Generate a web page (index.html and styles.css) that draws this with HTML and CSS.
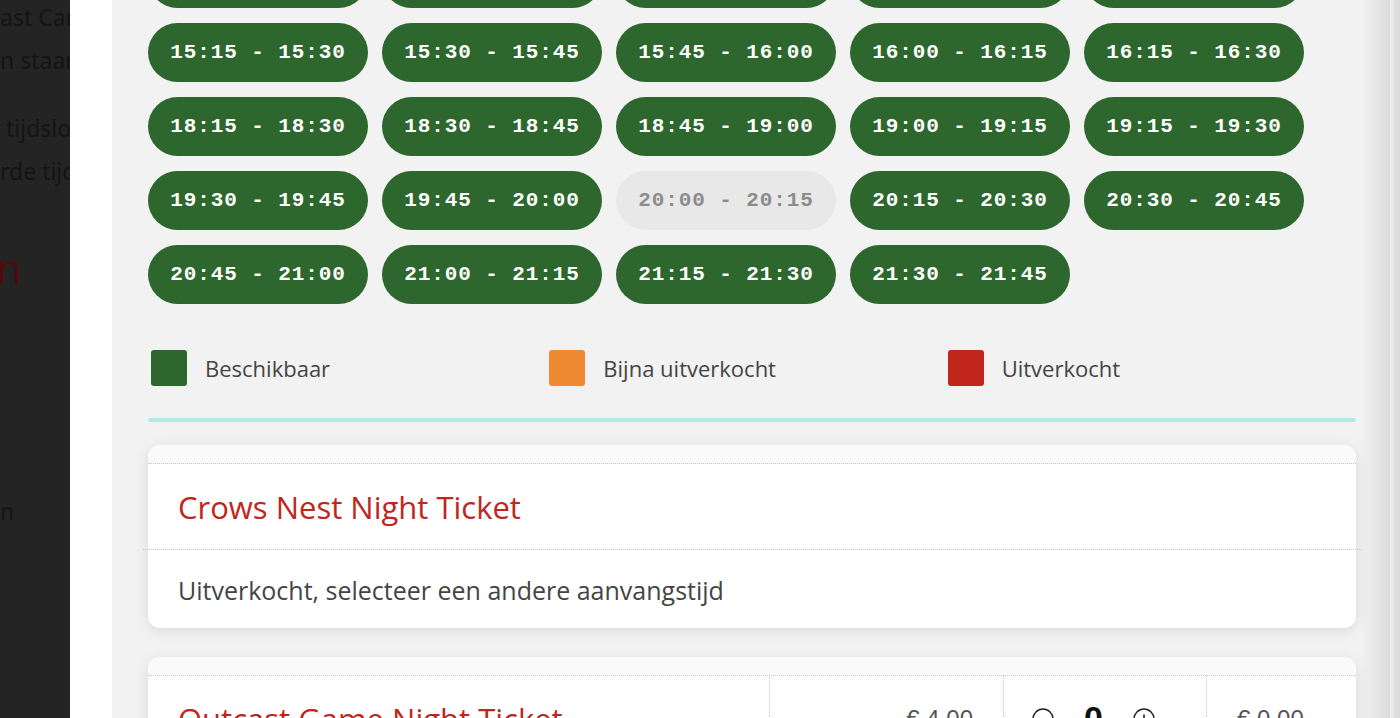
FILE: index.html
```html
<!DOCTYPE html>
<html lang="nl">
<head>
    <meta charset="UTF-8">
    <meta name="viewport" content="width=device-width, initial-scale=1.0">
    <title>Tickets kiezen</title>
    <link rel="stylesheet" href="styles.css">
</head>
<body>
    <div class="behind">
        <p class="bg-text">ast Camp<br>n staan</p>
        <p class="bg-text">&nbsp;tijdslot<br>rde tijd</p>
        <p class="bg-title">n</p>
        <p class="bg-text last">n</p>
    </div>
    <div class="modal">
        <div class="panel">
            <div class="slots">
                <button class="slot">14:00 - 14:15</button>
                <button class="slot">14:15 - 14:30</button>
                <button class="slot">14:30 - 14:45</button>
                <button class="slot">14:45 - 15:00</button>
                <button class="slot">15:00 - 15:15</button>
                <button class="slot">15:15 - 15:30</button>
                <button class="slot">15:30 - 15:45</button>
                <button class="slot">15:45 - 16:00</button>
                <button class="slot">16:00 - 16:15</button>
                <button class="slot">16:15 - 16:30</button>
                <button class="slot">18:15 - 18:30</button>
                <button class="slot">18:30 - 18:45</button>
                <button class="slot">18:45 - 19:00</button>
                <button class="slot">19:00 - 19:15</button>
                <button class="slot">19:15 - 19:30</button>
                <button class="slot">19:30 - 19:45</button>
                <button class="slot">19:45 - 20:00</button>
                <button class="slot disabled">20:00 - 20:15</button>
                <button class="slot">20:15 - 20:30</button>
                <button class="slot">20:30 - 20:45</button>
                <button class="slot">20:45 - 21:00</button>
                <button class="slot">21:00 - 21:15</button>
                <button class="slot">21:15 - 21:30</button>
                <button class="slot">21:30 - 21:45</button>
            </div>

            <div class="legend">
                <div class="legend-item"><span class="swatch green"></span>Beschikbaar</div>
                <div class="legend-item"><span class="swatch orange"></span>Bijna uitverkocht</div>
                <div class="legend-item"><span class="swatch red"></span>Uitverkocht</div>
            </div>

            <div class="divider"></div>

            <div class="ticket">
                <div class="ticket-top"></div>
                <div class="ticket-title">Crows Nest Night Ticket</div>
                <div class="ticket-sep"></div>
                <div class="ticket-note">Uitverkocht, selecteer een andere aanvangstijd</div>
            </div>

            <div class="ticket">
                <div class="ticket-top"></div>
                <div class="ticket-row">
                    <div class="ticket-title">Outcast Game Night Ticket</div>
                    <div class="cell price">€ 4,00</div>
                    <div class="cell qty">
                        <svg class="qty-btn" viewBox="0 0 22 22" width="22" height="22">
                            <circle cx="11" cy="11" r="10" fill="none" stroke="#222" stroke-width="1.4"/>
                            <path d="M6.5 11h9" stroke="#222" stroke-width="1.6"/>
                        </svg>
                        <span class="qty-val">0</span>
                        <svg class="qty-btn" viewBox="0 0 22 22" width="22" height="22">
                            <circle cx="11" cy="11" r="10" fill="none" stroke="#222" stroke-width="1.4"/>
                            <path d="M6.5 11h9M11 6.5v9" stroke="#222" stroke-width="1.6"/>
                        </svg>
                    </div>
                    <div class="cell total">€ 0,00</div>
                </div>
            </div>
        </div>
        <div class="edge"></div>
    </div>
</body>
</html>
```

FILE: styles.css
```css
body {
    margin: 0;
    height: 718px;
    overflow: hidden;
    display: flex;
    background: #242424;
    font-family: "Open Sans", "Noto Sans", sans-serif;
}
.behind {
    width: 70px;
    flex: none;
    overflow: hidden;
    white-space: nowrap;
    color: #141414;
    font-family: "Noto Sans", sans-serif;
    font-size: 23px;
    line-height: 43px;
}
.bg-text {
    margin: -4px 0 25px 0;
}
.bg-text + .bg-text {
    margin-top: 0;
}
.bg-title {
    margin: 45px 0 0 -4px;
    font-size: 42px;
    line-height: 60px;
    color: #4a0e0e;
}
.bg-text.last {
    margin-top: 192px;
}
.modal {
    flex: 1;
    display: flex;
    background: #ffffff;
    padding-left: 42px;
}
.panel {
    flex: 1;
    background: linear-gradient(to right, #f2f2f2 calc(100% - 30px), #dcdcdc 100%);
    padding: 0 34px 0 36px;
}
.edge {
    width: 10px;
    background: linear-gradient(to right, #ededed 0 3px, #e2e2e2 3px, #dadada 100%);
}
.slots {
    display: flex;
    flex-wrap: wrap;
    gap: 15px 14px;
    margin-top: -51px;
}
.slot {
    width: 220px;
    height: 59px;
    border: none;
    border-radius: 30px;
    background: #2d672e;
    color: #ffffff;
    font-family: "Liberation Mono", monospace;
    font-weight: bold;
    font-size: 21px;
    letter-spacing: 0.9px;
    cursor: pointer;
}
.slot.disabled {
    background: #e8e8e8;
    color: #8c8c8c;
    cursor: default;
}
.legend {
    display: grid;
    grid-template-columns: repeat(3, 1fr);
    margin-top: 46px;
    padding: 0 10px 0 3px;
}
.legend-item {
    display: flex;
    align-items: center;
    gap: 18px;
    font-size: 22px;
    color: #444444;
}
.swatch {
    width: 36px;
    height: 36px;
    border-radius: 3px;
}
.green { background: #2d672e; }
.orange { background: #ef8a33; }
.red { background: #c0261c; }
.divider {
    height: 4px;
    margin-top: 32px;
    border-radius: 2px;
    background: #b4e9e4;
}
.ticket {
    margin-top: 23px;
    background: #ffffff;
    border-radius: 12px;
    box-shadow: 0 3px 14px rgba(0, 0, 0, 0.1);
}
.ticket + .ticket {
    margin-top: 29px;
}
.ticket-top {
    height: 18px;
    background: #fafafa;
    border-radius: 12px 12px 0 0;
    border-bottom: 1px dotted #c6c6c6;
}
.ticket-title {
    height: 85px;
    display: flex;
    align-items: center;
    padding: 0 30px;
    font-size: 31px;
    color: #c0261c;
}
.ticket-sep {
    margin: 0 -6px 0 -5px;
    border-top: 1px dotted #c6c6c6;
}
.ticket-note {
    height: 76px;
    display: flex;
    align-items: center;
    padding: 2px 30px 0;
    font-size: 25px;
    color: #444444;
}
.ticket-row {
    display: grid;
    grid-template-columns: 621px 234px 203px 1fr;
}
.cell {
    border-left: 1px dotted #c6c6c6;
    display: flex;
    align-items: center;
    font-family: "Liberation Sans", sans-serif;
    font-size: 24px;
    color: #555555;
}
.price {
    justify-content: flex-end;
    padding-right: 30px;
}
.qty {
    gap: 30px;
    padding-left: 28px;
}
.qty-val {
    font-size: 34px;
    font-weight: bold;
    color: #111111;
}
.total {
    padding-left: 30px;
}
```
